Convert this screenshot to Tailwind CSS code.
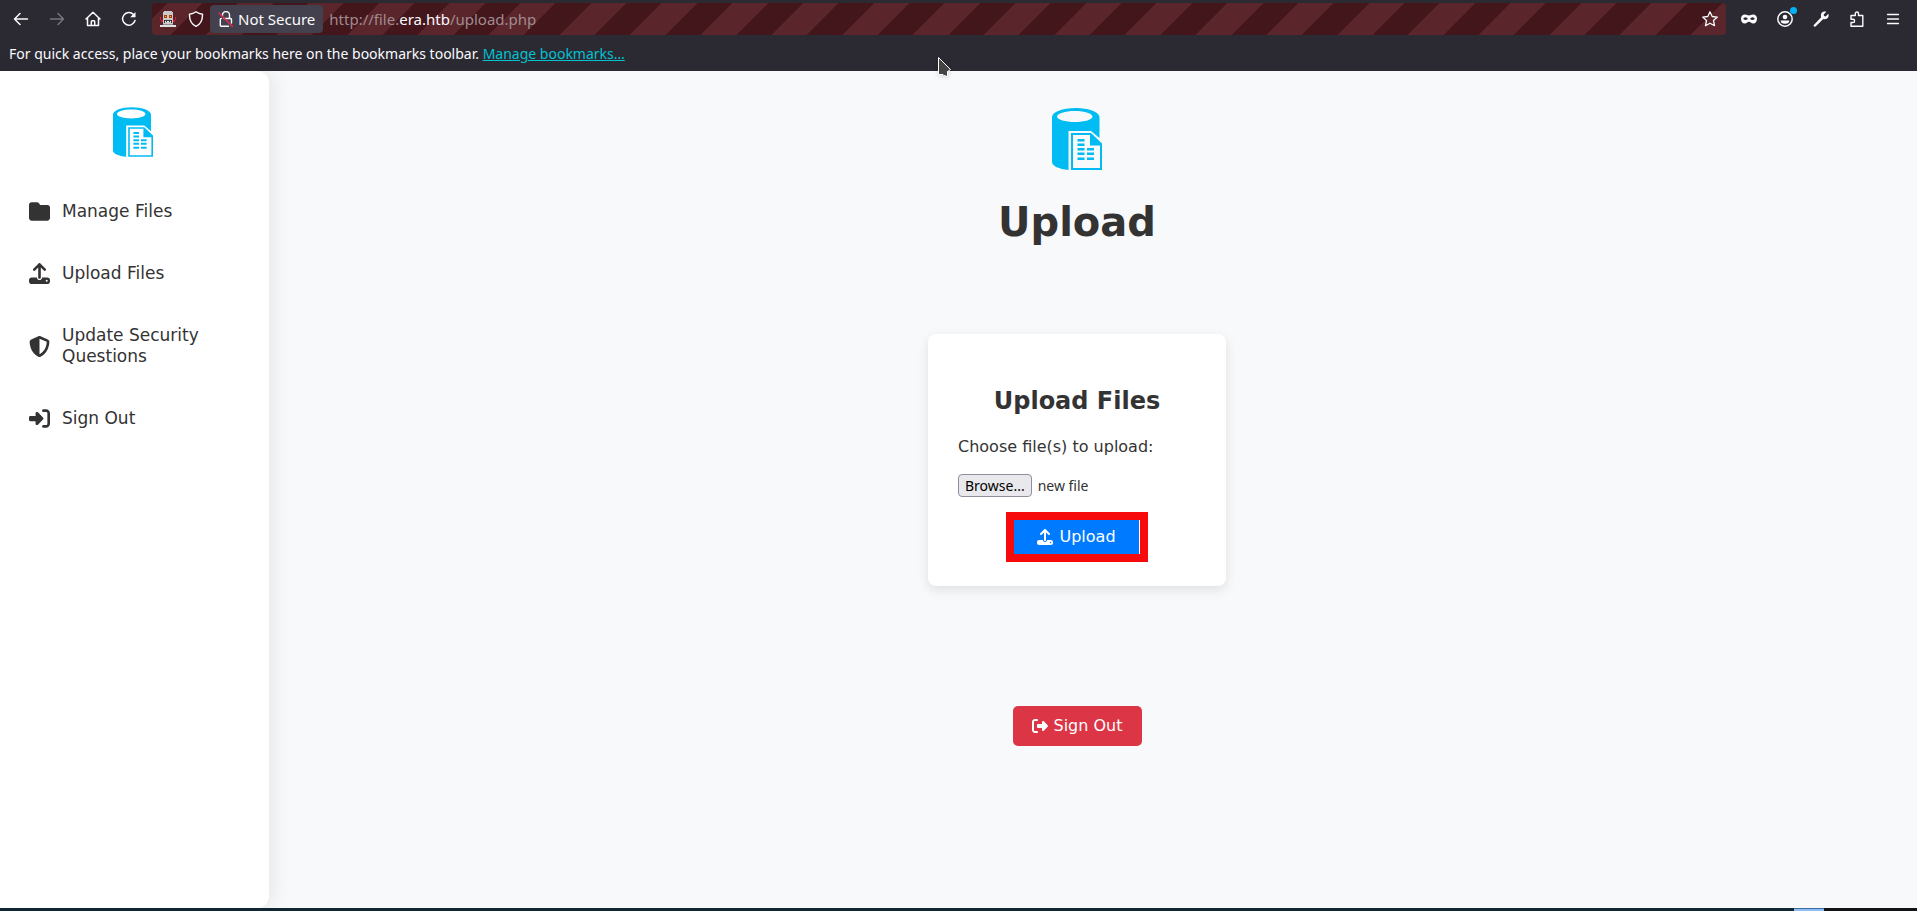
<!DOCTYPE html>
<html lang="en">
<head>
    <meta charset="UTF-8">
    <meta name="viewport" content="width=device-width, initial-scale=1.0">
    <title>Era - Upload</title>
    <script src="https://cdn.jsdelivr.net/npm/@tailwindcss/browser@4"></script>
</head>
<body class="flex flex-col min-h-screen bg-[#f8f9fb] text-[#333333] font-['DejaVu_Sans',sans-serif]">
    <!-- shared icons -->
    <svg class="hidden">
        <symbol id="logo" viewBox="0 0 50 62">
            <path fill="#00bcf2" fill-rule="evenodd" d="M0 9C0 4 10.500 0 23.500 0S47.500 4 47.500 9V30L39 23H16.500V62C7 61 0 58 0 54zM5 8.500C5 11.500 13 14 23 14S40.500 11.500 40.500 8.500 33 3 23 3 5 5.500 5 8.500z"/>
            <path fill="#00bcf2" fill-rule="evenodd" d="M19 25H39L50 35.500V62H19zM21 27V60H48V37.500H38V27z"/>
            <path fill="#00bcf2" d="M25.500 31h7v2.500h-7zM25.500 35.500h7V38h-7zM25.500 40h7v2.500h-7zM35 40h7v2.500h-7zM25.500 44.500h7V47h-7zM35 44.500h7V47h-7zM25.500 49.500h7V52h-7zM35 49.500h7V52h-7z"/>
        </symbol>
        <symbol id="upload" viewBox="0 0 512 512">
            <path fill="currentColor" fill-rule="evenodd" d="M288 109.300V352c0 17.700-14.300 32-32 32s-32-14.300-32-32V109.300l-73.400 73.400c-12.500 12.500-32.800 12.500-45.300 0s-12.500-32.800 0-45.300l128-128c12.500-12.500 32.800-12.500 45.300 0l128 128c12.500 12.500 12.500 32.800 0 45.300s-32.800 12.500-45.300 0L288 109.300zM64 352H192c0 35.300 28.700 64 64 64s64-28.700 64-64H448c35.300 0 64 28.700 64 64v32c0 35.300-28.700 64-64 64H64c-35.300 0-64-28.700-64-64V416c0-35.300 28.700-64 64-64zM432 456a24 24 0 1 0 0-48 24 24 0 1 0 0 48z"/>
        </symbol>
    </svg>

    <header class="bg-[#2b2a33] text-[#fbfbfe] font-['Noto_Sans',sans-serif]">
        <div class="flex items-center h-[38px] pt-[3px] pb-[3px] pl-[13px] pr-4">
            <div class="flex items-center gap-5 mr-[15px]">
                <button aria-label="Back"><svg class="size-4" viewBox="0 0 16 16" fill="none" stroke="currentColor" stroke-width="1.500" stroke-linecap="round" stroke-linejoin="round"><path d="M14.500 8H1.500M7 2.500L1.500 8 7 13.500"/></svg></button>
                <button aria-label="Forward" class="text-[#77767d]"><svg class="size-4" viewBox="0 0 16 16" fill="none" stroke="currentColor" stroke-width="1.500" stroke-linecap="round" stroke-linejoin="round"><path d="M1.500 8h13M9 2.500L14.500 8 9 13.500"/></svg></button>
                <button aria-label="Home"><svg class="size-4" viewBox="0 0 16 16" fill="none" stroke="currentColor" stroke-width="1.500" stroke-linecap="round" stroke-linejoin="round"><path d="M1 8l7-6.800L15 8M2.500 7v7.500h11V7M6.300 14.500V10.500q0-.8.8-.8h1.800q.8 0 .8.800v4"/></svg></button>
                <button aria-label="Reload"><svg class="size-4" viewBox="0 0 16 16" fill="none" stroke="currentColor" stroke-width="1.500" stroke-linecap="round"><path d="M14 9.500A6.300 6.300 0 1 1 12.500 3.500"/><path d="M14.500 1v5.300H9.200z" fill="currentColor" stroke="none"/></svg></button>
            </div>
            <div class="flex flex-1 items-center h-8 rounded bg-[repeating-linear-gradient(-45deg,#5a252b_0px,#5a252b_25px,#43161b_25px,#43161b_50px)]">
                <svg class="size-4 ml-2" viewBox="0 0 16 16">
                    <path fill="#d21f3c" d="M0 6h1v3h2v2H1V9H0zM15 6h1v3h-1v2h-2V9h2z"/>
                    <path fill="#c9c9cb" d="M4 0h8v1h1v12H3V1h1z"/>
                    <path fill="#8d8d92" d="M3 13h10v1H3z"/>
                    <path fill="#e2e2e4" d="M0 14h16v2H0z"/>
                    <path fill="#a33a12" d="M4 4h3v3H4zM9 4h3v3H9z"/>
                    <path fill="#ffc400" d="M5 5h1v1H5zM10 5h1v1h-1z"/>
                    <path fill="#333" d="M4 9h8v3h-1v-1H5v1H4z"/>
                    <path fill="#fff" d="M5 10h1v1H5zM7 10h2v1H7zM10 10h1v1h-1z"/>
                </svg>
                <svg class="size-4 ml-3" viewBox="0 0 16 16" fill="none" stroke="currentColor" stroke-width="1.400" stroke-linejoin="round"><path d="M8 .8C6 2.300 3.800 3 1.500 3.200 1.300 9 3 13 8 15.300 13 13 14.700 9 14.500 3.200 12.200 3 10 2.300 8 .8z"/></svg>
                <button class="flex items-center gap-1 h-7 ml-[6px] pl-2 pr-2 rounded bg-[#42414d] text-[15px]">
                    <svg class="size-4" viewBox="0 0 16 16" fill="none" stroke="currentColor" stroke-width="1.400" stroke-linecap="round">
                        <path d="M4.500 4.500V4a3.500 3.500 0 0 1 7 0v3M6 7.500h6.500q1 0 1 1v3.500M10.500 15.300H3.300q-1 0-1-1V8.500q0-1 1-1"/>
                        <path stroke="#e22850" d="M1 2l13.500 13.500"/>
                    </svg>
                    Not Secure
                </button>
                <span class="flex-1 ml-[6px] text-[15px] text-[#a08b8f]">http://file.<span class="text-[#fbfbfe]">era.htb</span>/upload.php</span>
                <button aria-label="Bookmark this page" class="mr-2"><svg class="size-4" viewBox="0 0 16 16" fill="none" stroke="currentColor" stroke-width="1.300" stroke-linejoin="round"><path d="M8 .8l2.200 4.700 5.100.6-3.800 3.500 1 5.100L8 12.200l-4.500 2.500 1-5.100L.7 6.100l5.100-.6z"/></svg></button>
            </div>
            <div class="flex items-center gap-5 ml-[15px]">
                <button aria-label="Private browsing"><svg class="size-4" viewBox="0 0 16 16" fill="currentColor" fill-rule="evenodd"><path d="M4 3.500c1.800 0 2.600.9 4 .9s2.200-.9 4-.9c2.600 0 4 1.700 4 4.300 0 2.900-1.500 4.700-3.800 4.700-2 0-2.800-1.700-4.200-1.700s-2.200 1.700-4.200 1.700C1.500 12.500 0 10.700 0 7.800 0 5.200 1.400 3.500 4 3.500zM4.500 6.300c-1.100 0-2 .9-2.300 1.500.8.800 1.500 1.200 2.400 1.200s1.700-.3 2.200-1c-.4-1-1.200-1.700-2.300-1.700zM11.500 6.300c-1.100 0-1.900.7-2.300 1.700.5.700 1.300 1 2.200 1s1.600-.4 2.400-1.200c-.3-.6-1.200-1.500-2.300-1.500z"/></svg></button>
                <button aria-label="Account" class="relative">
                    <svg class="size-4" viewBox="0 0 16 16"><circle cx="8" cy="8" r="7.200" fill="none" stroke="currentColor" stroke-width="1.500"/><circle cx="8" cy="6" r="2.300" fill="currentColor"/><path fill="currentColor" d="M3.700 9.500h8.600q0 3.200-4.300 3.200T3.700 9.500z"/></svg>
                    <span class="absolute -top-1 -right-1 size-[7px] rounded-full bg-[#00b3f4]"></span>
                </button>
                <button aria-label="Tools"><svg class="size-4" viewBox="0 0 16 16" fill="currentColor"><path d="M13.300.8L10.700 3.400l.3 1.700 1.700.3 2.600-2.600c1 2.300-.2 4.800-2.700 5.300-.8.200-1.600.1-2.300-.2L2.500 15.500c-1 .8-2.500-.5-1.700-1.600L8.200 6.200C7.300 3.500 8.400 1 11 .5c.8-.1 1.600 0 2.300.3z"/></svg></button>
                <button aria-label="Extensions"><svg class="size-4" viewBox="0 0 16 16" fill="none" stroke="currentColor" stroke-width="1.400" stroke-linejoin="round"><path d="M2 4.500h4.300V2.600a1.500 1.500 0 0 1 3.200 0v1.900h4.300v10.800H2V11.500h2a1.600 1.600 0 0 0 0-3.200H2z"/></svg></button>
                <button aria-label="Menu"><svg class="size-4" viewBox="0 0 16 16" stroke="currentColor" stroke-width="1.300" stroke-linecap="round"><path d="M2.500 3.500h11M2.500 8h11M2.500 12.500h11"/></svg></button>
            </div>
        </div>
        <p class="h-[33px] px-[9px] pt-1 text-sm leading-6">For quick access, place your bookmarks here on the bookmarks toolbar. <a href="#" class="text-[#00c2d1] underline">Manage bookmarks…</a></p>
    </header>

    <!-- mouse pointer -->
    <svg class="absolute left-[937px] top-[56px] w-[16px] h-[23px] drop-shadow-sm" viewBox="0 0 16 23"><path fill="#444" stroke="#fff" d="M1.500 1.500L13.500 13.500 10.500 15.500V20.500L7 19.500 6 18.500H1.500z"/></svg>

    <div class="flex flex-1">
        <nav class="w-[269px] shrink-0 pt-9 pl-[29px] pr-8 bg-white rounded-r-xl shadow-[4px_0_20px_rgba(0,0,0,0.08)]">
            <svg class="w-10 h-[50px] mx-auto mb-11"><use href="#logo"/></svg>
            <ul class="flex flex-col gap-[41px] text-[17px] leading-[21px]">
                <li>
                    <a href="#" class="flex items-center gap-3">
                        <svg class="size-[21px] shrink-0" viewBox="0 0 512 512" fill="currentColor"><path d="M64 480H448c35.300 0 64-28.700 64-64V160c0-35.300-28.700-64-64-64H288c-10.100 0-19.600-4.700-25.600-12.800L243.200 57.600C231.100 41.500 212.100 32 192 32H64C28.700 32 0 60.700 0 96V416c0 35.300 28.700 64 64 64z"/></svg>
                        Manage Files
                    </a>
                </li>
                <li>
                    <a href="#" class="flex items-center gap-3">
                        <svg class="size-[21px] shrink-0"><use href="#upload"/></svg>
                        Upload Files
                    </a>
                </li>
                <li>
                    <a href="#" class="flex items-center gap-3">
                        <svg class="size-[21px] shrink-0" viewBox="0 0 512 512" fill="currentColor" fill-rule="evenodd"><path d="M256 0c4.600 0 9.200 1 13.400 2.900L457.700 82.800c22 9.300 38.400 31 38.300 57.200c-.5 99.200-41.300 280.700-213.600 363.200c-16.700 8-36.100 8-52.800 0C57.300 420.700 16.500 239.200 16 140c-.1-26.200 16.300-47.900 38.300-57.200L242.700 2.900C246.800 1 251.400 0 256 0zm0 66.800V444.800C394 378 431.100 230.100 432 141.400L256 66.800z"/></svg>
                        Update Security Questions
                    </a>
                </li>
                <li>
                    <a href="#" class="flex items-center gap-3">
                        <svg class="size-[21px] shrink-0" viewBox="0 0 512 512" fill="currentColor"><path d="M217.900 105.900L340.700 228.700c7.200 7.200 11.300 17.100 11.300 27.300s-4.100 20.100-11.300 27.300L217.900 406.100c-6.400 6.400-15 9.900-24 9.900c-18.700 0-33.900-15.200-33.900-33.900l0-62.100L32 320c-17.700 0-32-14.300-32-32l0-64c0-17.700 14.300-32 32-32l128 0 0-62.100c0-18.700 15.200-33.900 33.900-33.900c9 0 17.600 3.600 24 9.900zM352 416l64 0c17.700 0 32-14.300 32-32l0-256c0-17.700-14.300-32-32-32l-64 0c-17.700 0-32-14.300-32-32s14.300-32 32-32l64 0c53 0 96 43 96 96l0 256c0 53-43 96-96 96l-64 0c-17.700 0-32-14.300-32-32s14.300-32 32-32z"/></svg>
                        Sign Out
                    </a>
                </li>
            </ul>
        </nav>

        <main class="flex flex-1 flex-col items-center pt-[37px] pr-8">
            <svg class="w-[50px] h-[62px]"><use href="#logo"/></svg>
            <h1 class="mt-7 text-[40px] leading-[48px] font-bold">Upload</h1>

            <form class="flex flex-col w-[298px] mt-[88px] px-[30px] pt-[53px] pb-6 bg-white rounded-lg shadow-[0_4px_12px_rgba(0,0,0,0.1)]">
                <h2 class="text-2xl leading-7 font-bold text-center">Upload Files</h2>
                <label for="files" class="mt-5 leading-6">Choose file(s) to upload:</label>
                <div class="flex items-center gap-[6px] mt-[15px] text-sm font-['Noto_Sans',sans-serif]">
                    <input type="file" id="files" class="sr-only" multiple>
                    <label for="files" class="h-[23px] px-[6px] rounded border border-[#8f8f9d] bg-[#e9e9ed] text-black leading-[21px]">Browse...</label>
                    <span>new file</span>
                </div>
                <div class="self-center mt-[15px] border-8 border-[#f60a0c] pr-px">
                    <button type="submit" class="flex items-center gap-[6px] h-[34px] px-[23px] bg-[#007bff] text-white">
                        <svg class="size-4"><use href="#upload"/></svg>
                        Upload
                    </button>
                </div>
            </form>

            <button class="flex items-center gap-[6px] h-10 mt-[120px] px-[19px] rounded-[5px] bg-[#dc3545] text-white">
                <svg class="size-4" viewBox="0 0 512 512" fill="currentColor"><path d="M377.900 105.900L500.700 228.700c7.200 7.200 11.300 17.100 11.300 27.300s-4.100 20.100-11.300 27.300L377.900 406.100c-6.400 6.400-15 9.900-24 9.900c-18.700 0-33.900-15.200-33.900-33.900l0-62.100-128 0c-17.700 0-32-14.300-32-32l0-64c0-17.700 14.300-32 32-32l128 0 0-62.100c0-18.700 15.200-33.900 33.900-33.900c9 0 17.600 3.600 24 9.900zM160 96L96 96c-17.700 0-32 14.300-32 32l0 256c0 17.700 14.300 32 32 32l64 0c17.700 0 32 14.300 32 32s-14.300 32-32 32l-64 0c-53 0-96-43-96-96L0 128C0 75 43 32 96 32l64 0c17.700 0 32 14.300 32 32s-14.300 32-32 32z"/></svg>
                Sign Out
            </button>
        </main>
    </div>

    <!-- desktop panel edge -->
    <footer class="flex justify-end h-[3px] bg-[#102733]">
        <div class="w-[30px] bg-[#8fbdf0] border-t border-[#3a6ea8]"></div>
        <div class="w-[93px] bg-[#101417]"></div>
    </footer>
</body>
</html>
